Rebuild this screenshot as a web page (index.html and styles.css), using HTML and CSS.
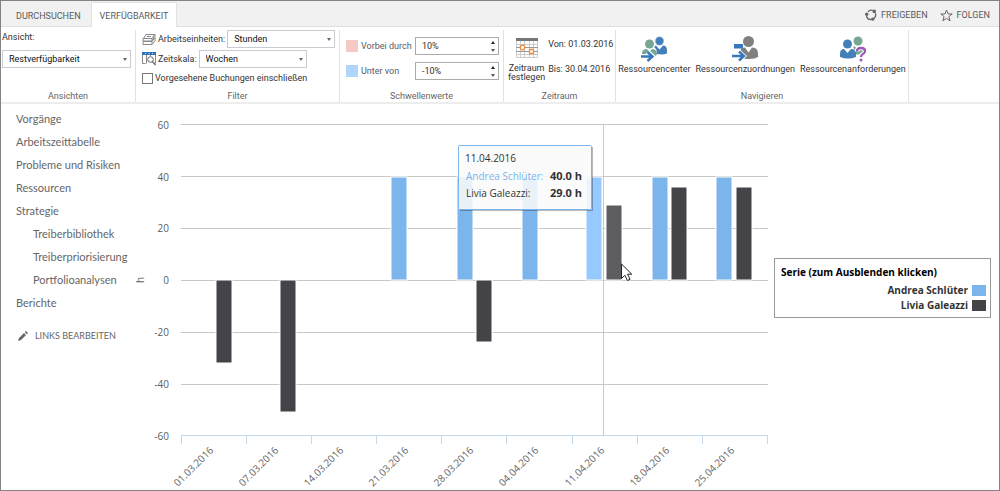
FILE: index.html
```html
<!DOCTYPE html>
<html lang="de">
<head>
<meta charset="utf-8">
<title>Verfügbarkeit</title>
<link rel="stylesheet" href="styles.css">
</head>
<body>
<header class="topbar">
  <nav class="tabs">
    <a class="tab" href="#">DURCHSUCHEN</a>
    <a class="tab tab-active" href="#">VERFÜGBARKEIT</a>
  </nav>
  <div class="actions">
    <button class="action" type="button">
      <svg width="12" height="12" viewBox="0 0 12 12" fill="none" stroke="#666" stroke-width="1.3"><path d="M3 2.7A4.6 4.6 0 0 1 8 1.5M10.3 4.2A4.6 4.6 0 0 1 9 9.4M6.600 10.500A4.600 4.600 0 0 1 1.500 7"/><g fill="#666" stroke="none"><circle cx="9.300" cy="2.400" r="1.800"/><circle cx="7.800" cy="10.100" r="1.700"/><circle cx="1.700" cy="5.300" r="1.700"/></g></svg>
      FREIGEBEN</button>
    <button class="action" type="button">
      <svg width="13" height="13" viewBox="0 0 13 13" fill="none" stroke="#666"><path d="M6.500 1l1.500 3.900 4.200.1-3.300 2.600 1.200 4.200-3.600-2.400-3.600 2.400 1.200-4.200L.8 5l4.200-.1z"/></svg>
      FOLGEN</button>
  </div>
</header>

<section class="ribbon" aria-label="Verfügbarkeit">
  <div class="group group-views">
    <div class="group-body stack">
      <label for="view">Ansicht:</label>
      <span class="select"><select id="view"><option>Restverfügbarkeit</option></select></span>
    </div>
    <div class="group-title">Ansichten</div>
  </div>
  <div class="group group-filter">
    <div class="group-body rows">
      <div class="row">
        <svg width="14" height="13" viewBox="0 0 14 13" fill="#fff" stroke="#888"><path d="M4 1.500h8.500L10 5.500H1.500z"/><path d="M1 5.500h9v2.500H1zM1 8.500h9v3H1zM10 5.500l3-4v2l-3 4M10 8.500l3-4v3l-3 4"/><path d="M5 3.500h4"/></svg>
        <label for="units">Arbeitseinheiten:</label>
        <span class="select"><select id="units"><option>Stunden</option></select></span>
      </div>
      <div class="row">
        <svg width="14" height="14" viewBox="0 0 14 14" fill="none"><path d="M.5 2v9.500M4.500 2v9.500M8.500 2v2M13.500 2v9.500M.5 11.500h3" stroke="#888"/><path d="M0 0h14v3H0z" fill="#2f72b5"/><path d="M3.500 1v1M7 1v1M10.500 1v1" stroke="#cfe2f5"/><circle cx="8.500" cy="7.500" r="2.800" fill="#fff" stroke="#666"/><path d="M10.500 9.500l3 3.500" stroke="#666" stroke-width="1.300"/></svg>
        <label for="scale">Zeitskala:</label>
        <span class="select"><select id="scale"><option>Wochen</option></select></span>
      </div>
      <label class="check"><input type="checkbox">Vorgesehene Buchungen einschließen</label>
    </div>
    <div class="group-title">Filter</div>
  </div>
  <div class="group group-limits">
    <div class="group-body limits">
      <span class="swatch swatch-over"></span>
      <label for="over">Vorbei durch</label>
      <span class="spin"><input id="over" value="10%"><button class="up" type="button" aria-label="Vorbei durch erhöhen"></button><button class="down" type="button" aria-label="Vorbei durch verringern"></button></span>
      <span class="swatch swatch-under"></span>
      <label for="under">Unter von</label>
      <span class="spin"><input id="under" value="-10%"><button class="up" type="button" aria-label="Unter von erhöhen"></button><button class="down" type="button" aria-label="Unter von verringern"></button></span>
    </div>
    <div class="group-title">Schwellenwerte</div>
  </div>
  <div class="group group-range">
    <div class="group-body range">
      <button class="big" type="button">
        <svg width="22" height="20" viewBox="0 0 22 20" fill="none"><path d="M.5.5h21v19H.5z" fill="#fff" stroke="#ccc"/><path d="M4.500 3v17M8.500 3v17M13.500 3v17M17.500 3v17M0 6.500h22M0 16.500h22" stroke="#ccc"/><path d="M0 9.500h22M0 13.500h22" stroke="#999"/><path d="M0 0h22v3H0z" fill="#777"/><circle cx="6.500" cy="9.500" r="2.300" fill="#fff" stroke="#f08a3c" stroke-width="1.300"/><path d="M13.500 11.500h4v4h-4z" fill="#fff" stroke="#f08a3c" stroke-width="1.300"/></svg>
        <span>Zeitraum<br>festlegen</span>
      </button>
      <div class="dates"><span>Von: 01.03.2016</span><span>Bis: 30.04.2016</span></div>
    </div>
    <div class="group-title">Zeitraum</div>
  </div>
  <div class="group group-nav">
    <div class="group-body navs">
      <button class="big" type="button">
        <svg width="28" height="26" viewBox="0 0 28 26"><g fill="#75a892"><circle cx="9.500" cy="8" r="4.500"/><path d="M2 18q0-5 5-5l2.500 3 2.500-3q5 0 5 5.500l-2 2H9z"/></g><circle cx="19.500" cy="5" r="4.500" fill="#457fba" stroke="#fff" stroke-width=".6"/><path d="M14 11l2-1.500 3.500 4 3.500-4q4 0 4 5v3q-4 1.500-10 .5 0-5-3-7z" fill="#457fba"/><path d="M1 20.500h10M7.500 16l5 4.500-5 4.500" fill="none" stroke="#fff" stroke-width="5"/><path d="M1 20.500h10M7.500 16l5 4.500-5 4.500" fill="none" stroke="#3678bb" stroke-width="2.400"/></svg>
        <span>Ressourcencenter</span>
      </button>
      <button class="big" type="button">
        <svg width="28" height="26" viewBox="0 0 28 26"><g fill="#808080"><circle cx="17.500" cy="5.500" r="5.500"/><path d="M10 12.500q2-1 4-1l3.500 5 3.500-5q6 0 6 6v3.500q-5 3-14 1.500l1-2-4.500-5z"/></g><path d="M3 8h9v4.500H3z" fill="#3678bb"/><path d="M1 20h10M8 15.500l5 4.500-5 4.500" fill="none" stroke="#fff" stroke-width="4"/><path d="M1 20h10M8 15.500l5 4.500-5 4.500" fill="none" stroke="#3678bb" stroke-width="2.400"/></svg>
        <span>Ressourcenzuordnungen</span>
      </button>
      <button class="big" type="button">
        <svg width="28" height="26" viewBox="0 0 28 26"><g fill="#75a892"><circle cx="19" cy="5" r="4.500"/><path d="M14 10.500h2l3 4 3-4q4 0 4 6l-2 2h-8q0-5-2-8z"/></g><circle cx="8.500" cy="8" r="4.500" fill="#457fba"/><path d="M1 21v-3q0-5 4-5l3.500 4 3.500-4q5 0 5 5v3q-8 3-16 0z" fill="#457fba"/><path d="M18 15.500q0-3.500 4-3.500t4 3q0 2-2 3t-2 3" fill="none" stroke="#fff" stroke-width="4.500"/><path d="M18 15.500q0-3.500 4-3.500t4 3q0 2-2 3t-2 3" fill="none" stroke="#9b59b6" stroke-width="2.300"/><circle cx="22" cy="24" r="1.500" fill="#9b59b6"/></svg>
        <span>Ressourcenanforderungen</span>
      </button>
    </div>
    <div class="group-title">Navigieren</div>
  </div>
</section>

<main class="content">
  <nav class="sidebar">
    <a href="#">Vorgänge</a>
    <a href="#">Arbeitszeittabelle</a>
    <a href="#">Probleme und Risiken</a>
    <a href="#">Ressourcen</a>
    <a href="#">Strategie</a>
    <a class="sub" href="#">Treiberbibliothek</a>
    <a class="sub" href="#">Treiberpriorisierung</a>
    <a class="sub" href="#">Portfolioanalysen</a>
    <a href="#">Berichte</a>
    <a class="edit" href="#"><svg width="10" height="10" viewBox="0 0 10 10" fill="#666"><path d="M0 10l1-3 5-5 2 2-5 5zM6.800 1.300L8 0l2 2-1.200 1.300z"/></svg>LINKS BEARBEITEN</a>
  </nav>

  <svg class="chart" viewBox="0 0 640 386" role="img" aria-label="Restverfügbarkeit in Stunden">
    <g transform="translate(51 20)">
      <path class="grid" d="M0 .5h587M0 52.500h587M0 104.500h587M0 156.500h587M0 208.500h587M0 260.500h587"/>
      <path class="axis" d="M0 311.500h587M.5 312v8M65.500 312v8M130.500 312v8M195.500 312v8M260.500 312v8M325.500 312v8M391.500 312v8M456.500 312v8M521.500 312v8M586.500 312v8"/>
      <path class="crosshair" d="M422.500 0v312"/>
      <g class="bar-a">
        <rect x="210" y="53" width="16" height="103"/>
        <rect x="276" y="53" width="16" height="103"/>
        <rect x="341" y="53" width="16" height="103"/>
        <rect class="hover-a" x="405" y="53" width="16" height="103"/>
        <rect x="471" y="53" width="16" height="103"/>
        <rect x="535" y="53" width="16" height="103"/>
      </g>
      <g class="bar-l">
        <rect x="35" y="156" width="16" height="83"/>
        <rect x="99" y="156" width="16" height="132"/>
        <rect x="295" y="156" width="16" height="62"/>
        <rect class="hover-l" x="425" y="81" width="16" height="75"/>
        <rect x="490" y="63" width="16" height="93"/>
        <rect x="555" y="63" width="16" height="93"/>
      </g>
      <g class="label" text-anchor="end">
        <text x="-12" y="5">60</text>
        <text x="-12" y="57">40</text>
        <text x="-12" y="108">20</text>
        <text x="-12" y="160">0</text>
        <text x="-12" y="212">-20</text>
        <text x="-12" y="264">-40</text>
        <text x="-12" y="316">-60</text>
      </g>
      <text class="label" transform="translate(-37 159) rotate(-90)">h</text>
      <g class="date" text-anchor="end">
        <text transform="translate(33 327) rotate(-45)">01.03.2016</text>
        <text transform="translate(98 327) rotate(-45)">07.03.2016</text>
        <text transform="translate(163 327) rotate(-45)">14.03.2016</text>
        <text transform="translate(228 327) rotate(-45)">21.03.2016</text>
        <text transform="translate(293 327) rotate(-45)">28.03.2016</text>
        <text transform="translate(358 327) rotate(-45)">04.04.2016</text>
        <text transform="translate(424 327) rotate(-45)">11.04.2016</text>
        <text transform="translate(489 327) rotate(-45)">18.04.2016</text>
        <text transform="translate(554 327) rotate(-45)">25.04.2016</text>
      </g>
      <g class="tip">
        <rect class="tip-box" x="277.500" y="21.500" width="133" height="64" rx="1"/>
        <path class="tip-shadow" d="M279 86.500h132.500V23"/>
        <text x="284" y="38">11.04.2016</text>
        <text class="tip-a" x="285" y="56">Andrea Schlüter:</text>
        <text class="tip-value" x="401" y="56">40.0 h</text>
        <text x="285" y="73">Livia Galeazzi:</text>
        <text class="tip-value" x="401" y="73">29.0 h</text>
      </g>
      <path class="cursor" d="M440.500 140v14.500l3.300-3.200 2.700 5.200 2.600-1.300-2.600-5h4.300z"/>
    </g>
  </svg>

  <aside class="legend">
    <h2>Serie (zum Ausblenden klicken)</h2>
    <button type="button">Andrea Schlüter<span class="key key-a"></span></button>
    <button type="button">Livia Galeazzi<span class="key key-l"></span></button>
  </aside>
</main>
</body>
</html>
```
FILE: styles.css
```css
* { box-sizing: border-box; }
body {
  margin: 0;
  min-height: 100vh;
  border: 1px solid #848284;
  background: #fff;
  color: #333;
  font: 9px/12px Roboto, "Open Sans", sans-serif;
}
button, input, select { font: inherit; color: inherit; }
button { padding: 0; border: 0; background: none; }
a { color: inherit; text-decoration: none; }
svg { flex: none; display: block; }

.topbar {
  display: flex;
  justify-content: space-between;
  height: 26px;
  padding-top: 1px;
  background: #f1f1f1;
  border-bottom: 1px solid #e1e1e1;
  color: #5a5a5a;
}
.tabs { display: flex; height: 25px; }
.tab { padding: 8px 10px 0 15px; }
.tab-active {
  padding: 7px 8px 0;
  border: 1px solid #e1e1e1;
  border-bottom: 0;
  background: #fff;
}
.actions { display: flex; gap: 12px; padding: 2px 9px 0 0; }
.action { display: flex; align-items: center; gap: 4px; }

.ribbon { display: flex; height: 77px; padding-top: 3px; border-bottom: 2px solid #ededed; }
.group {
  display: flex;
  flex-direction: column;
  justify-content: space-between;
  border-right: 1px solid #e1e1e1;
}
.group-title { height: 12px; text-align: center; color: #666; }
.group-views { width: 135px; }
.group-filter { width: 204px; }
.group-limits { width: 164px; }
.group-range { width: 112px; }
.group-nav { width: 293px; }

.stack { display: flex; flex-direction: column; gap: 7px; padding: 1px 4px 0 1px; }
.select { position: relative; display: block; flex: 1; }
.select select {
  display: block;
  width: 100%;
  height: 18px;
  padding: 0 6px;
  border: 1px solid #c8ccd2;
  border-radius: 0;
  background: #fff;
  color: #111;
  appearance: none;
}
.select::after {
  content: "";
  position: absolute;
  right: 4px;
  top: 8px;
  border: 2px solid transparent;
  border-top: 3px solid #666;
  border-bottom: 0;
}
.rows { display: flex; flex-direction: column; gap: 2px; padding-left: 6px; }
.row { display: flex; align-items: center; gap: 2px; }
.row .select { flex: 0 0 108px; }
.check { display: flex; align-items: center; gap: 2px; padding-top: 2px; }
.check input {
  width: 11px;
  height: 11px;
  margin: 0;
  border: 1px solid #777;
  background: #fff;
  appearance: none;
}

.limits {
  display: grid;
  grid-template-columns: 12px 51px 84px;
  gap: 7px 3px;
  align-items: center;
  padding: 7px 0 0 6px;
  color: #555b66;
}
.swatch { width: 12px; height: 12px; }
.swatch-over { background: #f6c9c4; }
.swatch-under { background: #b0d5fa; }
.spin { position: relative; display: block; }
.spin input {
  display: block;
  width: 100%;
  height: 18px;
  padding: 0 18px 0 6px;
  border: 1px solid #ababab;
  color: #333;
}
.up, .down { position: absolute; right: 4px; width: 4px; height: 3px; border: 2px solid transparent; }
.up { top: 4px; border-top: 0; border-bottom: 3px solid #222; }
.down { bottom: 3px; border-bottom: 0; border-top: 3px solid #555; }

.range { display: flex; gap: 3px; padding: 8px 0 0 4px; line-height: 9px; }
.big { display: flex; flex-direction: column; align-items: center; gap: 6px; white-space: nowrap; }
.dates { display: flex; flex-direction: column; gap: 16px; padding-top: 2px; white-space: nowrap; }
.navs { display: flex; justify-content: center; gap: 5px; padding-top: 6px; }
.navs .big { gap: 1px; }

.content { display: flex; align-items: flex-start; }
.sidebar {
  display: flex;
  flex: 0 0 129px;
  flex-direction: column;
  padding: 3px 0 0 15px;
  color: #666;
  font: 11px/23px Lato, sans-serif;
  white-space: nowrap;
}
.sub { padding-left: 17px; }
.edit { display: flex; align-items: center; gap: 7px; margin-top: 10px; padding-left: 2px; font-size: 9px; }
.chart { flex: 1; min-width: 0; height: auto; font-family: "Open Sans", sans-serif; }
.grid, .crosshair { stroke: #c8c8c8; fill: none; }
.axis { stroke: #c6d9ea; fill: none; }
.bar-a, .bar-l { stroke: #fff; stroke-width: 1; }
.bar-a { fill: #7cb5ec; }
.bar-l { fill: #434348; }
.hover-a { fill: #95c9ff; }
.hover-l { fill: #5c5c61; }
.label { fill: #606060; font-size: 10px; }
.date { fill: #666; font-size: 10px; }
.tip { fill: #333; font-size: 10px; }
.tip-box { fill: #fafafa; fill-opacity: .87; stroke: #7cb5ec; }
.tip-shadow { fill: none; stroke: #000; stroke-opacity: .28; }
.tip-a { fill: #7cb5ec; }
.tip-value { font-size: 11px; font-weight: 700; text-anchor: end; }
.cursor { fill: #fff; stroke: #222; stroke-width: 1; }

.legend {
  display: flex;
  flex: 0 0 217px;
  flex-direction: column;
  align-items: flex-end;
  margin: 154px 8px 0 4px;
  padding: 6px 4px 4px 6px;
  border: 1px solid #999;
  font: bold 10px/15px "Open Sans", sans-serif;
}
.legend h2 { align-self: stretch; margin: 0 0 3px; color: #000; font: inherit; }
.legend button { display: flex; align-items: center; gap: 4px; }
.key { width: 14px; height: 11px; }
.key-a { background: #7cb5ec; }
.key-l { background: #434348; }
```
